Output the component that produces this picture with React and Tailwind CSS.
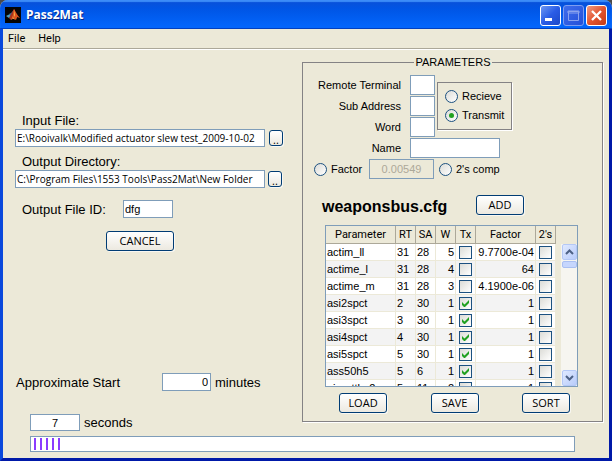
import React from "react";

const rows = [
  ["actim_ll", "31", "28", "5", false, "9.7700e-04"],
  ["actime_l", "31", "28", "4", false, "64"],
  ["actime_m", "31", "28", "3", false, "4.1900e-06"],
  ["asi2spct", "2", "30", "1", true, "1"],
  ["asi3spct", "3", "30", "1", true, "1"],
  ["asi4spct", "4", "30", "1", true, "1"],
  ["asi5spct", "5", "30", "1", true, "1"],
  ["ass50h5", "5", "6", "1", true, "1"],
  ["airpntths2", "5", "11", "2", false, "1"],
];

const box = "border border-[#7f9db9] bg-white outline-none";

function Button({ children, className = "w-12 h-5", label }) {
  return (
    <button
      type="button"
      aria-label={label}
      className={`${className} shrink-0 rounded-[3px] border border-[#003c74] bg-linear-to-b from-white to-[#ece9e0] font-['Open_Sans',sans-serif] text-[11px] leading-[18px] text-black shadow-[1px_1px_0_#f8f7f2]`}
    >
      {children}
    </button>
  );
}

function Radio({ name, defaultChecked, children }) {
  return (
    <label className="flex items-center gap-1">
      <span className="relative block size-[13px] shrink-0">
        <input
          type="radio"
          name={name}
          defaultChecked={defaultChecked}
          className="peer block size-[13px] appearance-none rounded-full border border-[#1c5180] bg-linear-to-br from-[#dcdcd7] to-white"
        />
        <span className="pointer-events-none absolute inset-1 hidden rounded-full bg-[#21a121] peer-checked:block" />
      </span>
      {children}
    </label>
  );
}

function Check({ checked, label }) {
  return (
    <span className="relative mx-auto block size-[13px]">
      <input
        type="checkbox"
        aria-label={label}
        defaultChecked={checked}
        className="peer block size-[13px] appearance-none border border-[#1c5180] bg-linear-to-br from-[#dcdcd7] to-white"
      />
      <svg viewBox="0 0 13 13" className="pointer-events-none absolute inset-0 hidden size-[13px] peer-checked:block">
        <path d="M3 5v3l2 2h1l4-4V3L5.500 7.500z" fill="#21a121" />
      </svg>
    </span>
  );
}

function ScrollButton({ down }) {
  return (
    <button
      type="button"
      aria-label={down ? "Scroll down" : "Scroll up"}
      className="flex h-4 w-[15px] items-center justify-center rounded-[2px] border border-[#b4c8f6] bg-linear-to-br from-[#dfe9ff] to-[#b9ccfa]"
    >
      <svg viewBox="0 0 9 6" className="h-[6px] w-[9px]">
        <path d={down ? "M1 1l3.500 3.500L8 1" : "M1 5l3.500-3.500L8 5"} fill="none" stroke="#4d6185" strokeWidth="2" />
      </svg>
    </button>
  );
}

function TitleBar() {
  return (
    <header className="flex h-[29px] items-center bg-linear-to-b from-[#0a4fd6] from-0% via-[#0055e5] via-30% to-[#0365fb] to-90% pt-px pr-[5px] pl-[5px] shadow-[inset_0_2px_1px_#3c8cf8,inset_0_-1px_0_#0140c0]">
      <svg viewBox="0 0 16 16" className="size-4">
        <rect width="16" height="16" fill="#050505" />
        <path d="M1 9l4-2 2 2-3 2z" fill="#4d9fc0" />
        <path d="M4 7l2-1 3-3-2 6-1 1z" fill="#3d6e91" />
        <path d="M9 2L5 9l-1 2 2 2 3-4z" fill="#a8321c" />
        <path d="M9 2L8 8l-2 5 3-2 2 2 1-3z" fill="#e8702a" />
        <path d="M9 2c2 3 3 6 6 9l-3-1-2 3-2-2z" fill="#d9531e" />
        <path d="M9 3l1 5-2 4 1 0z" fill="#f9b84a" />
      </svg>
      <h1 className="ml-[5px] flex-1 font-['Open_Sans',sans-serif] text-[12px] leading-4 font-bold text-white [text-shadow:1px_1px_0_#0a2a8a]">
        Pass2Mat
      </h1>
      <div className="flex gap-[2px]">
        <button type="button" aria-label="Minimize" className="size-[21px] rounded-[3px] border border-white bg-linear-to-br from-[#6c95f2] via-[#2a5ce6] to-[#1b48c8]">
          <svg viewBox="0 0 19 19" className="size-[19px]"><path d="M4 12h7v3H4z" fill="#fff" /></svg>
        </button>
        <button type="button" aria-label="Maximize" disabled className="size-[21px] rounded-[3px] border border-[#7d9df0] bg-linear-to-br from-[#3f6cec] to-[#2450d8]">
          <svg viewBox="0 0 19 19" className="size-[19px]"><path d="M4.500 5.500h10v9h-10zM4 5h11v2H4z" fill="none" stroke="#8ba3ee" /></svg>
        </button>
        <button type="button" aria-label="Close" className="size-[21px] rounded-[3px] border border-white bg-linear-to-br from-[#f09a80] via-[#e2542f] to-[#c43a14]">
          <svg viewBox="0 0 19 19" className="size-[19px]"><path d="M5 5l9 9M14 5l-9 9" stroke="#fff" strokeWidth="2.300" /></svg>
        </button>
      </div>
    </header>
  );
}

function PathField({ id, label, value, buttonClass }) {
  return (
    <div>
      <label htmlFor={id} className="ml-[7px] block text-[13px] leading-4">{label}</label>
      <div className="flex items-center">
        <input id={id} defaultValue={value} className={`${box} h-[18px] w-[250px] px-px font-['Open_Sans',sans-serif] text-[10px]`} />
        <Button className={`${buttonClass} h-4 w-[14px]`} label={`Browse ${label}`}>..</Button>
      </div>
    </div>
  );
}

function Files() {
  return (
    <section className="flex w-[299px] shrink-0 flex-col pt-[58px] pl-3">
      <PathField id="in" label="Input File:" value="E:\Rooivalk\Modified actuator slew test_2009-10-02" buttonClass="ml-1" />
      <div className="mt-[7px]">
        <PathField id="out" label="Output Directory:" value="C:\Program Files\1553 Tools\Pass2Mat\New Folder" buttonClass="ml-[3px]" />
      </div>
      <div className="mt-3 ml-[7px] flex items-center text-[13px]">
        <label htmlFor="fid" className="w-[101px]">Output File ID:</label>
        <input id="fid" defaultValue="dfg" className={`${box} h-[18px] w-[50px] px-px text-[11px]`} />
      </div>
      <div className="mt-[13px] ml-[91px] flex">
        <Button className="h-5 w-[68px]">CANCEL</Button>
      </div>
      <div className="mt-[122px] ml-px flex items-center text-[13px]">
        <label htmlFor="min" className="w-[146px]">Approximate Start</label>
        <input id="min" defaultValue="0" className={`${box} h-[18px] w-[49px] px-[2px] text-right text-[11px]`} />
        <span className="ml-1">minutes</span>
      </div>
      <div className="mt-[23px] ml-[15px] flex items-center text-[13px]">
        <input id="sec" defaultValue="7" className={`${box} h-[17px] w-[50px] text-center text-[11px]`} />
        <label htmlFor="sec" className="ml-1">seconds</label>
      </div>
    </section>
  );
}

function ParameterTable() {
  const head = "h-[18px] border-r border-b border-[#aca899] p-0 text-center font-normal";
  const cell = "h-[17px] border-r border-b border-[#ece9d8] p-0";
  return (
    <div className="mr-5 ml-[21px] mt-[10px] flex h-[162px] w-[253px] overflow-hidden border border-[#7f9db9]">
      <table className="h-max w-[230px] shrink-0 table-fixed border-separate border-spacing-0">
        <thead>
          <tr className="font-[Roboto,sans-serif]">
            <th className={`${head} w-[70px]`}>Parameter</th>
            <th className={`${head} w-5`}>RT</th>
            <th className={`${head} w-5`}>SA</th>
            <th className={`${head} w-5`}>W</th>
            <th className={`${head} w-5`}>Tx</th>
            <th className={`${head} w-[60px]`}>Factor</th>
            <th className={`${head} w-5`}>2's</th>
          </tr>
        </thead>
        <tbody>
          {rows.map(([name, rt, sa, w, tx, factor]) => (
            <tr key={name} className="bg-white even:bg-[#f3f3f3]">
              <td className={`${cell} pl-px`}>{name}</td>
              <td className={`${cell} pl-px`}>{rt}</td>
              <td className={`${cell} pl-px`}>{sa}</td>
              <td className={`${cell} pr-px text-right`}>{w}</td>
              <td className={cell}><Check checked={tx} label={`${name} Tx`} /></td>
              <td className={`${cell} pr-px text-right`}>{factor}</td>
              <td className={cell}><Check label={`${name} 2's`} /></td>
            </tr>
          ))}
        </tbody>
      </table>
      <div className="mt-[18px] ml-[5px] flex flex-1 flex-col items-center bg-[#f6f5f0]">
        <ScrollButton />
        <div className="mt-px h-[7px] w-[15px] rounded-[2px] border border-[#a9bff2] bg-[#c6d6fd]" />
        <div className="flex-1" />
        <ScrollButton down />
      </div>
    </div>
  );
}

function Parameters() {
  const label = "pr-[9px] text-right";
  const small = `${box} h-5 w-[25px]`;
  return (
    <fieldset className="mr-[6px] min-w-0 flex-1 self-start border border-[#848284] pb-2 pl-px shadow-[1px_1px_0_#fff]">
      <legend className="mx-auto px-[2px] text-[11px] leading-[14px]">PARAMETERS</legend>
      <div className="mt-[6px] flex">
        <div className="grid grid-cols-[106px_25px] items-center gap-y-px">
          <label htmlFor="rt" className={label}>Remote Terminal</label>
          <input id="rt" className={small} />
          <label htmlFor="sa" className={label}>Sub Address</label>
          <input id="sa" className={small} />
          <label htmlFor="wd" className={label}>Word</label>
          <input id="wd" className={small} />
        </div>
        <div className="mt-[7px] ml-[2px] flex h-12 w-[75px] flex-col justify-center gap-[6px] border border-[#848284] pl-[7px] shadow-[1px_1px_0_#fff]">
          <Radio name="dir">Recieve</Radio>
          <Radio name="dir" defaultChecked>Transmit</Radio>
        </div>
      </div>
      <div className="mt-px grid grid-cols-[106px_90px] items-center">
        <label htmlFor="nm" className={label}>Name</label>
        <input id="nm" className={`${box} h-5`} />
      </div>
      <div className="mt-px flex items-center pl-[10px]">
        <div className="w-[55px]"><Radio name="factor">Factor</Radio></div>
        <input aria-label="Factor value" disabled defaultValue="0.00549" className="h-5 w-[65px] border border-[#7f9db9] bg-[#ece9d8] text-center text-[#aca899]" />
        <div className="ml-[5px]"><Radio name="comp">2's comp</Radio></div>
      </div>
      <div className="mt-4 flex items-center pl-[18px]">
        <h2 className="w-[154px] pt-1 text-base leading-4 font-bold">weaponsbus.cfg</h2>
        <Button>ADD</Button>
      </div>
      <ParameterTable />
      <div className="mt-[6px] flex justify-between pr-8 pl-[35px]">
        <Button>LOAD</Button>
        <Button>SAVE</Button>
        <Button>SORT</Button>
      </div>
    </fieldset>
  );
}

export default function App() {
  return (
    <div className="bg-[#4a4a4a]">
      <div className="flex min-h-screen flex-col overflow-hidden rounded-t-lg bg-[#ece9d8] font-['Liberation_Sans',Arial,sans-serif] text-[11px] leading-[13px] text-black">
        <TitleBar />
        <div className="flex flex-1 flex-col border-x-3 border-b-3 border-t-0 border-r-[#0019a8] border-b-[#0019a8] border-l-[#0a48dc]">
          <nav className="flex h-5 items-center gap-[13px] border-b border-[#aca899] pl-[5px] font-[Roboto,sans-serif] shadow-[0_1px_0_#fff]">
            <button type="button">File</button>
            <button type="button">Help</button>
          </nav>
          <main className="pt-[6px]">
            <div className="flex items-start">
              <Files />
              <Parameters />
            </div>
            <div role="progressbar" aria-label="Progress" aria-valuenow={2} className="mt-[5px] mr-[34px] ml-[27px] flex h-4 items-stretch gap-1 border border-[#7f9db9] bg-white px-[3px] py-px">
              {[0, 1, 2, 3, 4].map((i) => (
                <span key={i} className="w-[2px] bg-[#8a3cff]" />
              ))}
            </div>
          </main>
        </div>
      </div>
    </div>
  );
}
